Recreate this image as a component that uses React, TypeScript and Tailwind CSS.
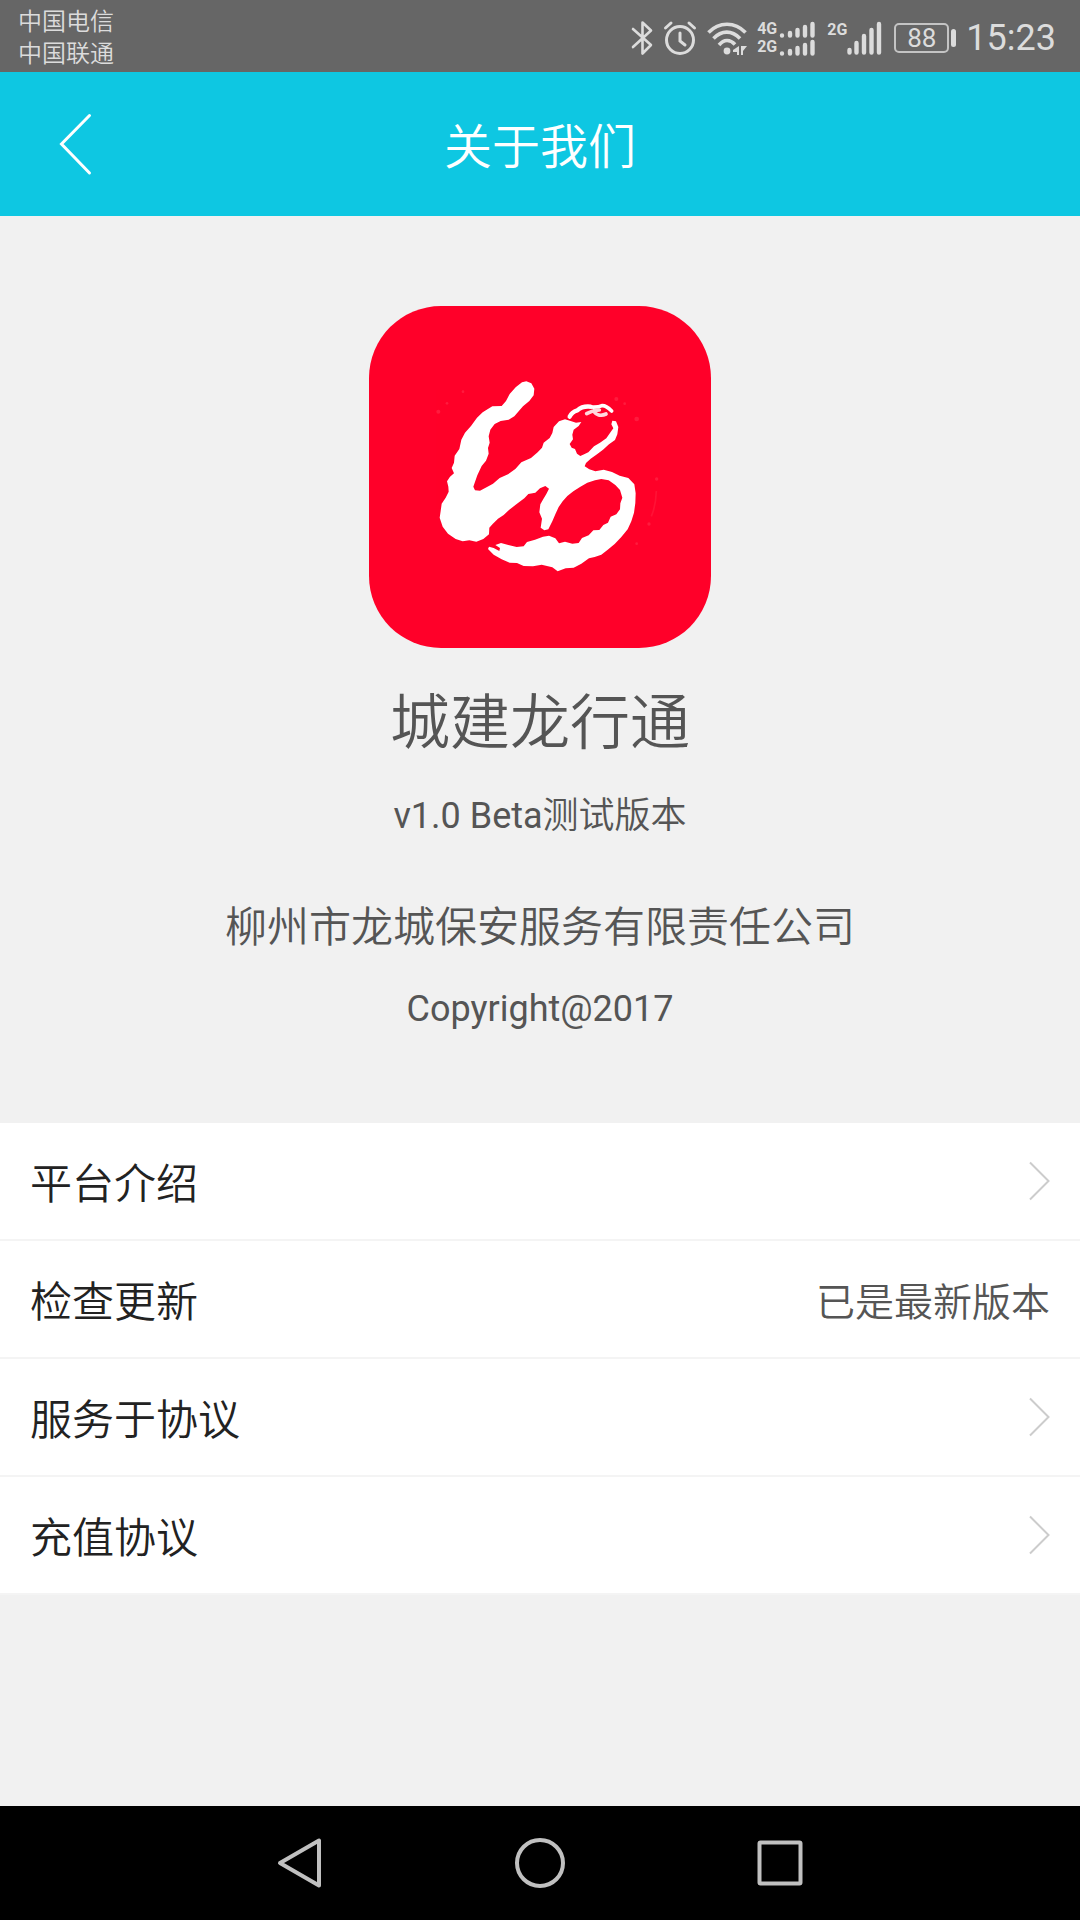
import type { ReactNode } from "react";

type MenuItem = {
	id: string;
	label: string;
	value?: string;
};

const carriers = ["中国电信", "中国联通"];

const menuItems: MenuItem[] = [
	{ id: "intro", label: "平台介绍" },
	{ id: "update", label: "检查更新", value: "已是最新版本" },
	{ id: "service", label: "服务于协议" },
	{ id: "recharge", label: "充值协议" },
];

function BluetoothIcon() {
	return (
		<svg
			viewBox="0 0 22 36"
			className="h-9 w-[22px]"
			fill="none"
			stroke="currentColor"
			strokeWidth="2.6"
			strokeLinejoin="round"
			strokeLinecap="round"
		>
			<path d="M2 9 20 25 11.500 33.500V2.500L20 10.500 2 27" />
		</svg>
	);
}

function AlarmIcon() {
	return (
		<svg
			viewBox="0 0 34 36"
			className="h-9 w-[34px]"
			fill="none"
			stroke="currentColor"
			strokeWidth="3"
			strokeLinecap="round"
		>
			<circle cx="17" cy="20" r="13.500" />
			<path d="M17 13v8l5 4M2.500 8 8 3M31.500 8 26 3" />
		</svg>
	);
}

function WifiIcon() {
	return (
		<svg
			viewBox="0 0 40 36"
			className="h-9 w-10"
			fill="none"
			stroke="currentColor"
			strokeWidth="3.6"
		>
			<path d="M1.500 12.500C12 1.500 28 1.500 38.500 12.500M6.500 18.500c8-8.500 18.500-8.500 26.500 0M12 25c5-6 11-6 16-.5" />
			<circle cx="20" cy="31" r="3.400" fill="currentColor" stroke="none" />
			<path
				d="M32 26v9h-2v-3h-4v-2zM34 26h6l-4 5v4h-2z"
				fill="currentColor"
				stroke="none"
			/>
		</svg>
	);
}

function SmallBars() {
	return (
		<svg
			viewBox="0 0 36 17"
			className="h-[17px] w-9"
			stroke="currentColor"
			strokeWidth="4.4"
			strokeLinecap="round"
		>
			<path d="M3 14.500v0M11 12v2.500M18.500 9v5.500M26 6v8.500M33.500 3v11.500" />
		</svg>
	);
}

function TallBars() {
	return (
		<svg
			viewBox="0 0 35 34"
			className="h-[34px] w-[35px]"
			stroke="currentColor"
			strokeWidth="4.4"
			strokeLinecap="round"
		>
			<path d="M2.500 29v2.500M9.500 22v9.500M17 15v16.500M24.500 9v22.500M32 3v28.500" />
		</svg>
	);
}

function NetworkLabel({ children }: { children: ReactNode }) {
	return (
		<span className="text-[16px] leading-[18px] font-bold">{children}</span>
	);
}

function Battery({ level }: { level: number }) {
	return (
		<div className="flex items-center gap-0.5">
			<span className="flex h-[30px] w-[55px] items-center justify-center rounded-[5px] border-2 border-[#c4c4c4] text-[26px] leading-[30px]">
				{level}
			</span>
			<span className="h-[18px] w-[5px] rounded-sm bg-[#dcdcdc]" />
		</div>
	);
}

function StatusBar() {
	return (
		<div className="flex h-[72px] shrink-0 items-center justify-between bg-[#666666] pt-1 pr-6 pl-[18px] text-[#dcdcdc]">
			<div className="text-[24px] leading-8 font-[350]">
				{carriers.map((name) => (
					<div key={name}>{name}</div>
				))}
			</div>
			<div className="flex items-center gap-2.5">
				<BluetoothIcon />
				<AlarmIcon />
				<WifiIcon />
				<div className="flex items-center gap-3">
					<div className="flex flex-col">
						{["4G", "2G"].map((net) => (
							<div key={net} className="flex items-center gap-0.5">
								<NetworkLabel>{net}</NetworkLabel>
								<SmallBars />
							</div>
						))}
					</div>
					<div className="flex items-start">
						<NetworkLabel>2G</NetworkLabel>
						<TallBars />
					</div>
					<Battery level={88} />
				</div>
				<span className="text-[36px] leading-10">15:23</span>
			</div>
		</div>
	);
}

function Header() {
	return (
		<header className="grid h-36 shrink-0 grid-cols-[150px_1fr_150px] items-center bg-[#0ec7e2] text-white">
			<button
				type="button"
				aria-label="返回"
				className="flex h-full items-center pl-[58px]"
			>
				<svg
					viewBox="0 0 34 64"
					className="h-16 w-[34px]"
					fill="none"
					stroke="currentColor"
					strokeWidth="3"
					strokeLinecap="round"
				>
					<path d="M31.500 3.500 3.500 32l28 29" />
				</svg>
			</button>
			<h1 className="pt-2 text-center text-[48px] leading-[64px] font-[350]">
				关于我们
			</h1>
		</header>
	);
}

function Logo() {
	return (
		<div className="size-[342px] overflow-hidden rounded-[72px] bg-[#ff0029]">
			<svg viewBox="27 30 1026 1026" className="size-full" fill="#fff">
				<path d="M486 259 499 256 514 262 523 278 521 298 508 315 489 331 463 361 446 371 422 375 404 384 391 401 386 421 389 440 384 456 386 473 378 494 365 510 352 538 347 552 340 572 345 583 360 584 381 573 399 563 419 546 444 535 466 519 484 499 513 486 533 469 546 455 551 440 569 426 577 411 581 393 597 376 615 370 632 375 648 380 664 378 656 390 641 401 637 416 639 430 629 444 635 455 645 459 651 473 661 480 674 474 685 469 702 451 720 440 739 427 752 408 760 397 754 385 757 374 768 376 775 393 772 415 765 432 747 445 729 461 709 476 692 488 678 501 674 511 688 520 706 526 731 521 756 528 779 539 805 546 823 565 827 592 826 621 822 650 814 676 803 700 784 723 764 744 745 760 724 776 704 783 687 787 664 803 641 815 617 817 593 826 577 814 545 806 519 811 491 810 471 801 449 800 425 790 401 776 384 759 387 752 401 756 418 765 420 756 406 747 423 741 445 747 470 753 491 751 501 738 525 731 549 722 567 719 586 727 597 742 615 737 637 743 656 741 666 726 686 718 700 703 718 702 730 687 744 680 752 662 769 655 780 640 781 622 787 605 780 582 766 567 746 553 724 549 705 553 682 560 660 573 640 586 622 600 608 616 596 633 586 655 577 676 565 700 553 703 542 695 546 668 538 649 541 625 550 609 559 594 567 578 556 570 540 577 526 590 505 594 493 607 469 625 447 642 431 657 414 668 398 684 388 695 387 715 370 729 349 737 328 733 308 736 287 729 264 713 248 692 239 665 242 645 245 623 257 605 266 587 265 572 261 556 270 542 282 532 275 516 282 500 284 479 298 459 304 431 315 410 333 390 351 365 368 349 397 331 425 330 438 315 449 294 467 274Z" />
				{/* dry-brush loops on the head */}
				<g
					fill="none"
					stroke="#fff"
					strokeLinecap="round"
					strokeLinejoin="round"
				>
					<path
						d="M629 362C634 350 642 346 652 343C662 334 676 330 692 332"
						strokeWidth="13"
					/>
					<path
						d="M692 333C708 334 716 334 726 329C738 328 746 336 755 345"
						strokeWidth="11"
					/>
					<path
						d="M680 353C692 346 704 343 718 342M700 345C708 356 722 362 738 354"
						strokeWidth="11"
						opacity="0.85"
					/>
				</g>
				<g fill="#ff5a70" opacity="0.3">
					<circle cx="235" cy="347" r="6" />
					<circle cx="261" cy="322" r="4" />
					<circle cx="309" cy="287" r="4" />
					<circle cx="769" cy="309" r="6" />
					<circle cx="794" cy="323" r="4" />
					<circle cx="830" cy="369" r="7" />
					<circle cx="890" cy="549" r="5" />
					<circle cx="867" cy="684" r="5" />
					<circle cx="830" cy="743" r="4" />
				</g>
				<path
					d="M889 585C888 620 882 642 874 661"
					fill="none"
					stroke="#ff5a70"
					strokeWidth="5"
					opacity="0.2"
				/>
			</svg>
		</div>
	);
}

function AppInfo() {
	return (
		<section className="flex flex-col items-center py-[90px] text-[#555555]">
			<Logo />
			<h2 className="mt-10 text-[60px] leading-[72px] font-[350]">
				城建龙行通
			</h2>
			<p className="mt-8 text-[36px] leading-[48px]">
				v1.0 Beta<span className="font-[350]">测试版本</span>
			</p>
			<p className="mt-[60px] text-[42px] leading-[56px] font-[350]">
				柳州市龙城保安服务有限责任公司
			</p>
			<p className="mt-[29px] text-[36px] leading-[48px]">Copyright@2017</p>
		</section>
	);
}

function MenuRow({ item }: { item: MenuItem }) {
	return (
		<li className="border-b-2 border-[#f4f4f4]">
			<button
				type="button"
				className="flex h-[116px] w-full items-center justify-between px-[30px] text-left font-[350]"
			>
				<span className="pt-2 text-[42px] leading-[56px] text-[#222222]">
					{item.label}
				</span>
				{item.value ? (
					<span className="pt-2 text-[39px] leading-[56px] text-[#555555]">
						{item.value}
					</span>
				) : (
					<svg
						viewBox="0 0 22 40"
						className="h-10 w-[22px]"
						fill="none"
						stroke="#cccccc"
						strokeWidth="2"
					>
						<path d="M2 1.500 20.500 20 2 38.500" />
					</svg>
				)}
			</button>
		</li>
	);
}

function NavButton({ label, children }: { label: string; children: ReactNode }) {
	return (
		<button
			type="button"
			aria-label={label}
			className="flex h-full w-60 items-center justify-center"
		>
			<svg
				viewBox="0 0 52 52"
				className="size-[52px]"
				fill="none"
				stroke="#c0c0c0"
				strokeWidth="4"
				strokeLinejoin="round"
			>
				{children}
			</svg>
		</button>
	);
}

function NavigationBar() {
	return (
		<nav className="flex h-[114px] shrink-0 justify-center bg-black">
			<NavButton label="后退">
				<path d="M45 3.500v45L6 26z" />
			</NavButton>
			<NavButton label="主页">
				<circle cx="26" cy="26" r="23" />
			</NavButton>
			<NavButton label="最近任务">
				<rect x="5.500" y="5.500" width="41" height="41" rx="1" />
			</NavButton>
		</nav>
	);
}

export default function App() {
	return (
		<div
			lang="zh-CN"
			className="flex min-h-screen flex-col bg-[#f1f1f1] font-[Roboto,'Noto_Sans_CJK_SC',sans-serif]"
		>
			<StatusBar />
			<Header />
			<main className="flex-1">
				<AppInfo />
				<ul className="bg-white">
					{menuItems.map((item) => (
						<MenuRow key={item.id} item={item} />
					))}
				</ul>
			</main>
			<NavigationBar />
		</div>
	);
}
